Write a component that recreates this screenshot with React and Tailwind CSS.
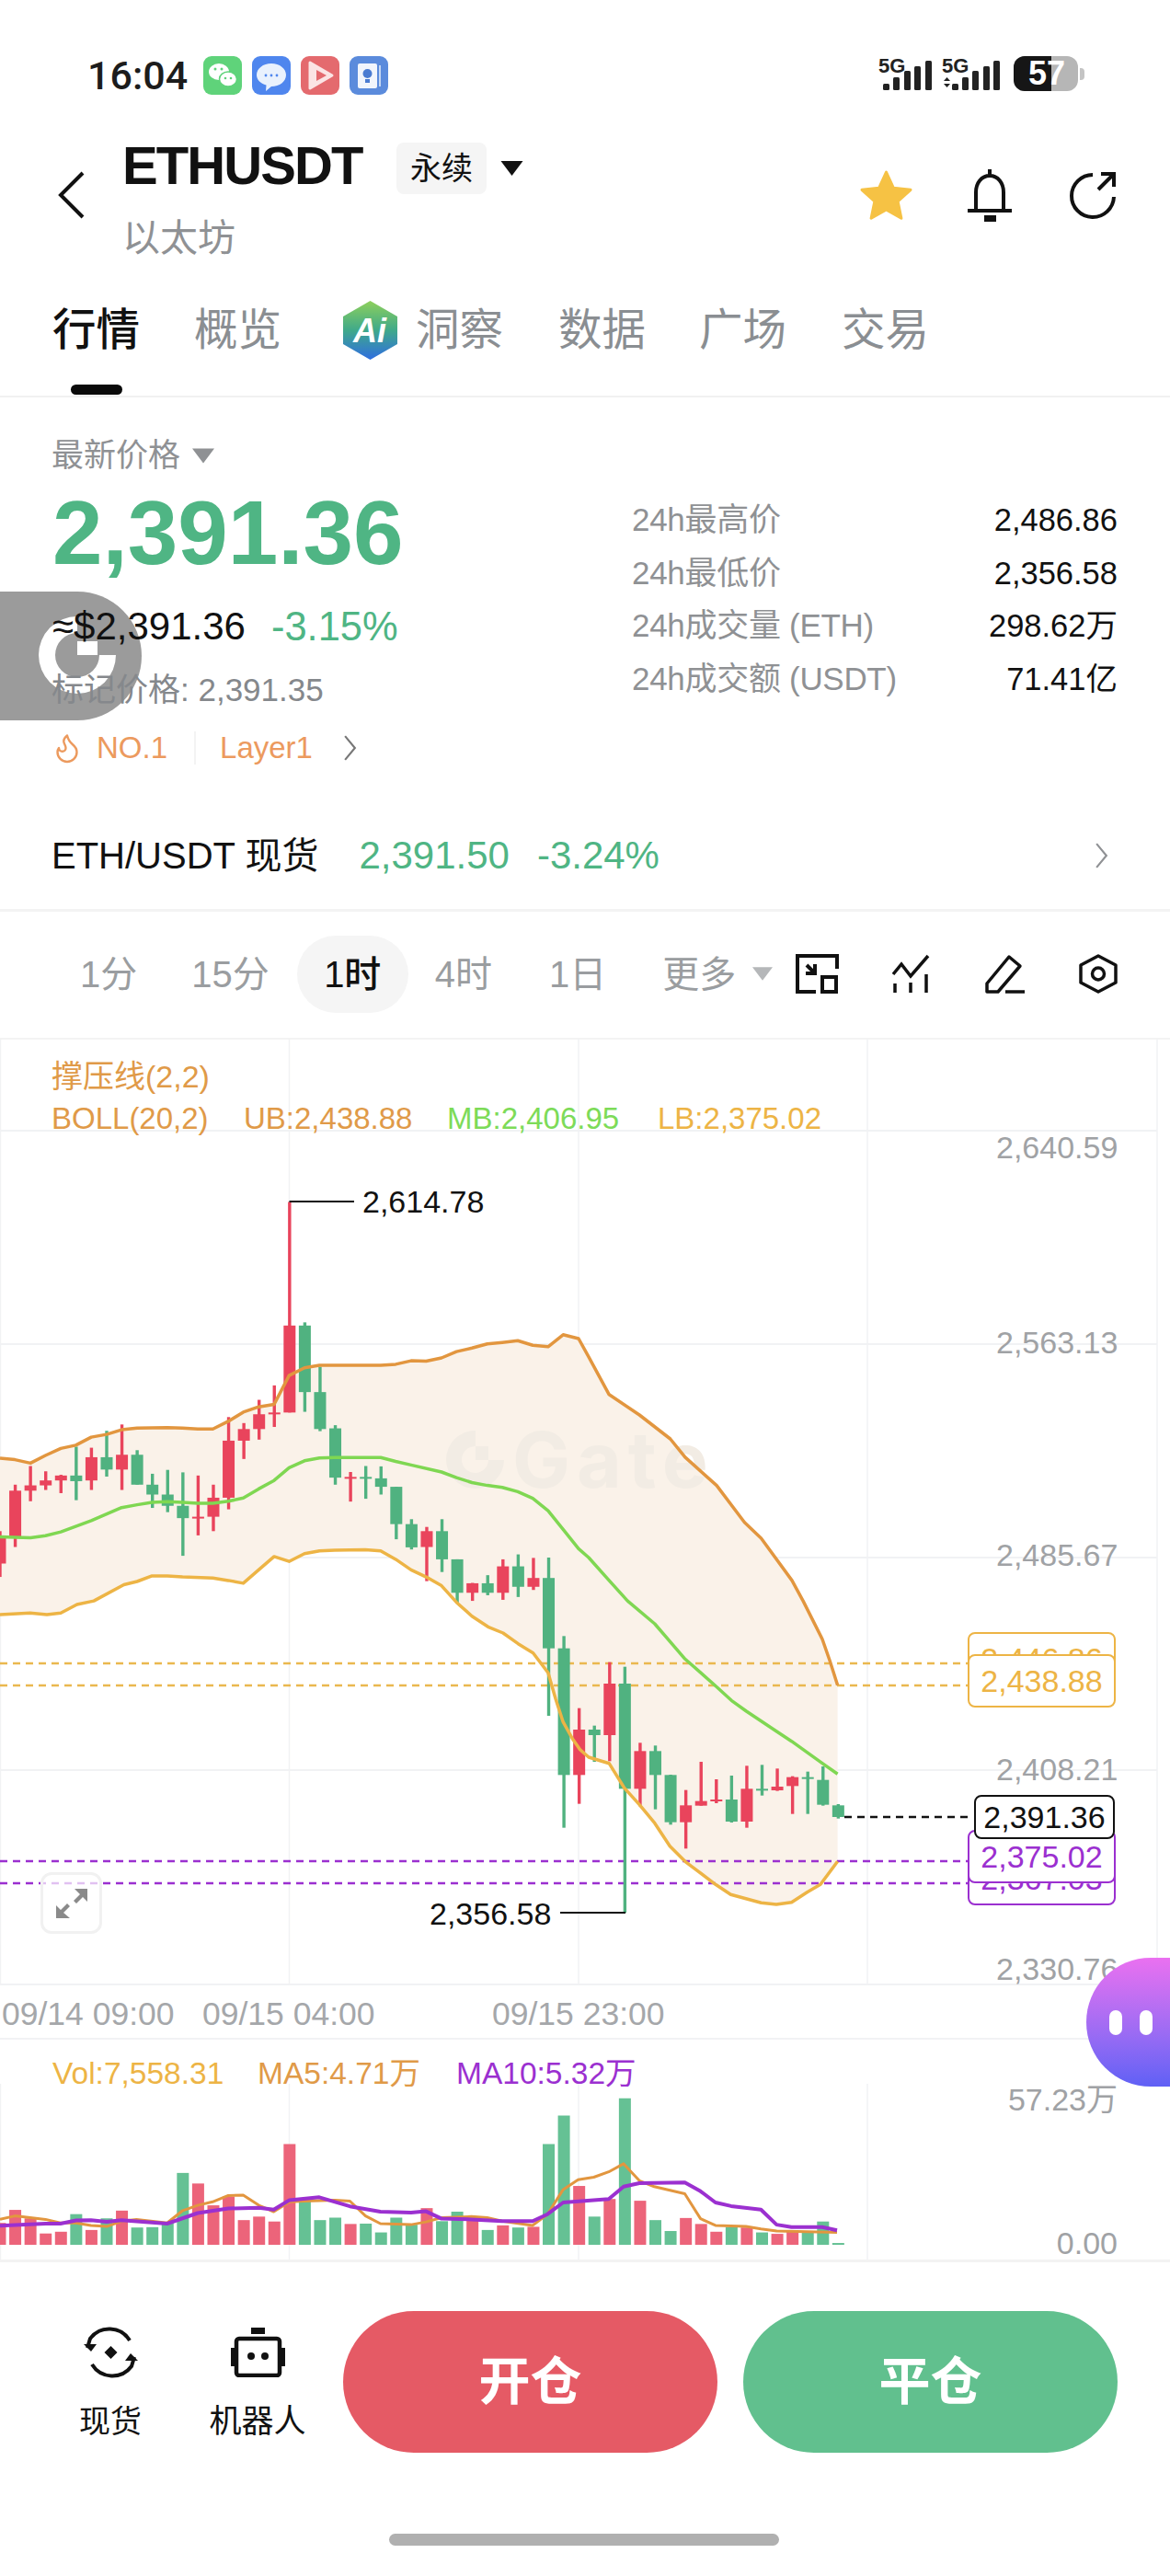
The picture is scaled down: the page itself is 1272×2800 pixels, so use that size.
import React from 'react';
import { Flame } from 'lucide-react';

// chart points were read off zoomed crops, these map them back to page pixels
const ax = (x) => x / 2.45;
const bx = (x) => 640 + x / 2.48;
const ty = (y) => 1140 + y / 2.613;
const by = (y) => 1740 + y / 3;
const vx = (x) => x / 1.233;
const vy = (y) => 2200 + y / 2.613;

const STEP = 16.57;
const RED = '#e9445c';
const GREEN = '#50b280';

// [color, wickTop, bodyTop, bodyBottom, wickBottom] in page pixels
const topCandles = [
  ['r', 1370, 1385, 1462, 1500], ['r', 1238, 1255, 1390, 1415], ['r', 1185, 1240, 1255, 1285], ['r', 1200, 1226, 1240, 1253],
  ['r', 1210, 1212, 1226, 1262], ['g', 1130, 1212, 1228, 1282], ['r', 1133, 1160, 1226, 1253], ['g', 1085, 1160, 1195, 1215],
  ['r', 1067, 1153, 1195, 1253], ['g', 1140, 1153, 1238, 1238], ['g', 1207, 1238, 1266, 1304], ['g', 1196, 1266, 1298, 1316],
  ['g', 1203, 1298, 1333, 1440], ['r', 1212, 1329, 1333, 1382], ['r', 1238, 1275, 1329, 1370], ['r', 1046, 1113, 1275, 1308],
  ['r', 1063, 1080, 1113, 1165], ['r', 997, 1038, 1080, 1110], ['r', 956, 1033, 1038, 1074], ['r', 435, 786, 1033, 1033],
  ['g', 777, 786, 975, 1031], ['g', 903, 975, 1080, 1086], ['g', 1069, 1078, 1218, 1238], ['r', 1202, 1216, 1219, 1286],
  ['g', 1185, 1216, 1219, 1278], ['g', 1186, 1220, 1244, 1266], ['g', 1244, 1244, 1350, 1393], ['g', 1336, 1350, 1416, 1422],
  ['r', 1358, 1370, 1415, 1512], ['g', 1336, 1370, 1450, 1486], ['g', 1450, 1450, 1545, 1575], ['r', 1517, 1518, 1545, 1568],
  ['g', 1495, 1518, 1545, 1552], ['r', 1450, 1470, 1545, 1565], ['g', 1436, 1470, 1528, 1557], ['r', 1446, 1503, 1528, 1537],
].map(([c, a, b, d, e]) => [c, ty(a), ty(b), ty(d), ty(e)]);

const lowCandles = [
  ['g', 1445, 1503, 155, 375], ['g', 115, 155, 568, 740], ['r', 350, 420, 568, 662], ['g', 407, 420, 438, 525],
  ['r', 200, 270, 438, 523], ['g', 215, 270, 613, 1017], ['r', 463, 490, 613, 670], ['g', 472, 490, 568, 680],
  ['g', 567, 568, 722, 730], ['r', 617, 667, 722, 808], ['r', 525, 653, 668, 668], ['r', 582, 648, 653, 660],
  ['g', 570, 648, 720, 723], ['r', 538, 613, 720, 740], ['g', 535, 613, 618, 635], ['r', 547, 606, 618, 620],
  ['r', 572, 575, 604, 695], ['g', 557, 575, 579, 695], ['g', 540, 584, 665, 668], ['g', 663, 667, 705, 710],
].map(([c, a, b, d, e], i) => (i === 0 ? [c, ty(a), ty(b), by(d), by(e)] : [c, by(a), by(b), by(d), by(e)]));

const candles = [...topCandles, ...lowCandles];

const upper = [
  ...[[0, 1163], [40, 1167], [81, 1177], [121, 1155], [162, 1135], [202, 1126], [243, 1103], [284, 1095], [324, 1082], [365, 1077], [446, 1076], [486, 1077], [527, 1080], [567, 1080], [608, 1058], [648, 1032], [689, 1017], [730, 1010], [770, 928], [811, 906], [851, 899], [1014, 899], [1054, 896], [1095, 886], [1135, 887], [1176, 878], [1216, 860], [1257, 850], [1298, 838], [1338, 834], [1379, 829], [1419, 842], [1460, 846], [1500, 812], [1541, 823]].map(([x, y]) => [ax(x), ty(y)]),
  ...[[0, 875], [55, 982], [137, 1040], [220, 1108], [260, 1160], [345, 1240], [420, 1345], [465, 1390], [548, 1510], [578, 1568]].map(([x, y]) => [bx(x), ty(y)]),
  ...[[630, 125], [650, 195], [671, 275]].map(([x, y]) => [bx(x), by(y)]),
];

const middle = [
  ...[[0, 1386], [81, 1389], [121, 1383], [162, 1372], [243, 1340], [324, 1303], [365, 1295], [405, 1288], [446, 1286], [486, 1288], [527, 1291], [567, 1291], [608, 1285], [648, 1276], [689, 1250], [730, 1226], [770, 1190], [811, 1170], [851, 1162], [892, 1161], [1014, 1161], [1054, 1172], [1095, 1182], [1176, 1202], [1216, 1218], [1257, 1232], [1298, 1240], [1338, 1246], [1379, 1258], [1419, 1277], [1460, 1312], [1500, 1365], [1541, 1420]].map(([x, y]) => [ax(x), ty(y)]),
  ...[[0, 1445], [55, 1510], [105, 1568]].map(([x, y]) => [bx(x), ty(y)]),
  ...[[178, 75], [260, 190], [340, 275], [385, 325], [425, 360], [506, 425], [547, 458], [630, 530], [671, 565]].map(([x, y]) => [bx(x), by(y)]),
];

const lower = [
  ...[[0, 45], [80, 40], [125, 45], [162, 40], [205, 12]].map(([x, y]) => [ax(x), by(y)]),
  ...[[250, 1568], [330, 1522], [365, 1513], [405, 1497], [446, 1497], [486, 1500], [567, 1503], [608, 1510], [648, 1518], [689, 1480], [730, 1442], [770, 1456], [811, 1434], [851, 1426], [892, 1424], [973, 1423], [1014, 1426], [1054, 1450], [1095, 1480], [1135, 1500], [1176, 1525]].map(([x, y]) => [ax(x), ty(y)]),
  ...[[1216, 5], [1257, 50], [1300, 85], [1340, 105], [1380, 140], [1420, 170], [1460, 235], [1480, 320], [1500, 395], [1525, 450], [1545, 485]].map(([x, y]) => [ax(x), by(y)]),
  ...[[0, 510], [55, 530], [96, 610], [137, 665], [178, 725], [219, 800], [260, 850], [342, 925], [383, 958], [465, 985], [506, 990], [547, 983], [589, 950], [625, 925], [671, 850]].map(([x, y]) => [bx(x), by(y)]),
];

const pts = (list) => list.map(([x, y]) => `${x.toFixed(1)},${y.toFixed(1)}`).join(' ');

// [color, top] on the zoomed volume crop
const volumes = [
  ['r', 565], ['r', 528], ['r', 552], ['r', 595], ['r', 590], ['g', 540], ['r', 585], ['g', 552], ['r', 530], ['g', 578],
  ['g', 577], ['g', 565], ['g', 423], ['r', 453], ['r', 515], ['r', 490], ['r', 557], ['r', 547], ['r', 561], ['r', 341],
  ['g', 500], ['g', 557], ['g', 550], ['r', 568], ['g', 567], ['g', 592], ['g', 550], ['g', 570], ['r', 523], ['g', 560],
  ['g', 533], ['r', 555], ['g', 585], ['r', 572], ['g', 578], ['r', 576], ['g', 341], ['g', 260], ['r', 460], ['g', 547],
  ['r', 497], ['g', 211], ['r', 502], ['g', 557], ['g', 588], ['r', 551], ['r', 568], ['r', 590], ['g', 577], ['r', 578],
  ['g', 592], ['r', 596], ['r', 590], ['g', 590], ['g', 561], ['g', 622],
];

const ma5 = [[0, 555], [20, 545], [61, 555], [81, 565], [102, 565], [122, 572], [143, 575], [163, 560], [183, 555], [224, 565], [245, 530], [265, 515], [285, 505], [306, 487], [326, 486], [347, 515], [367, 533], [388, 505], [408, 503], [449, 500], [469, 503], [490, 545], [510, 567], [551, 570], [571, 562], [592, 550], [632, 547], [653, 550], [673, 560], [714, 572], [734, 540], [755, 470], [775, 442], [796, 435], [816, 420], [836, 397], [857, 445], [877, 462], [918, 482], [939, 553], [959, 572], [1000, 575], [1020, 582], [1041, 588], [1122, 592]];
const ma10 = [[0, 573], [61, 567], [81, 567], [102, 558], [122, 557], [143, 562], [163, 557], [224, 567], [265, 537], [306, 524], [347, 522], [367, 527], [388, 500], [428, 492], [469, 518], [510, 533], [551, 536], [571, 532], [592, 553], [632, 555], [673, 560], [714, 560], [734, 540], [755, 507], [816, 497], [836, 462], [857, 452], [918, 450], [939, 475], [959, 507], [980, 517], [1020, 527], [1041, 570], [1061, 577], [1102, 577], [1122, 586]];

const AppIcons = () => (
  <div className="flex gap-[11px] ml-[17px]">
    <svg width="42" height="42" viewBox="0 0 42 42">
      <rect width="42" height="42" rx="9" fill="#5fd37a" />
      <ellipse cx="17" cy="17" rx="11" ry="9" fill="#fff" />
      <ellipse cx="27" cy="25" rx="9.5" ry="8" fill="#fff" stroke="#5fd37a" strokeWidth="1.5" />
      <circle cx="13" cy="14" r="1.5" fill="#5fd37a" /><circle cx="20" cy="14" r="1.5" fill="#5fd37a" />
      <circle cx="24" cy="24" r="1.3" fill="#5fd37a" /><circle cx="30" cy="24" r="1.3" fill="#5fd37a" />
    </svg>
    <svg width="42" height="42" viewBox="0 0 42 42">
      <rect width="42" height="42" rx="9" fill="#4f86ee" />
      <path d="M21 8c9 0 16 5.500 16 12.500S30 33 21 33l-6 5 .5-6.500C9 29.500 5 25.500 5 20.500 5 13.500 12 8 21 8z" fill="#e9f1fd" />
      <circle cx="15" cy="21" r="1.400" fill="#4f86ee" /><circle cx="21" cy="21" r="1.400" fill="#4f86ee" /><circle cx="27" cy="21" r="1.400" fill="#4f86ee" />
    </svg>
    <svg width="42" height="42" viewBox="0 0 42 42">
      <rect width="42" height="42" rx="9" fill="#e46a6e" />
      <path d="M10 7l24 14-24 14z" fill="#fbe4e4" stroke="#fbe4e4" strokeWidth="3" strokeLinejoin="round" />
      <path d="M17 15l11 6-11 6z" fill="#e46a6e" />
    </svg>
    <svg width="42" height="42" viewBox="0 0 42 42">
      <rect width="42" height="42" rx="9" fill="#5b8bdc" />
      <rect x="9" y="8" width="21" height="27" rx="2" fill="#f1f5fc" />
      <path d="M32 10h2v23h-2z" fill="#c5d7f3" />
      <circle cx="19.500" cy="19" r="5" fill="#4a7bd1" />
      <rect x="17" y="25" width="5" height="4" fill="#4a7bd1" />
    </svg>
  </div>
);

const Signal = ({ dual }) => (
  <svg className="-mt-[4px]" width={dual ? 64 : 58} height="46" viewBox={dual ? '0 -4 64 46' : '0 -4 58 46'}>
    <text x="0" y="18" fontSize="22" fontWeight="700" fill="#222" fontFamily="Liberation Sans, sans-serif">5G</text>
    {dual && <path d="M2 27l3.500-4 3.500 4zM2 30l3.500 4 3.500-4z" fill="#222" />}
    {(dual
      ? [[11, 30, 7], [22, 23, 14], [33, 16, 21], [45, 11, 26], [56, 5, 32]]
      : [[5, 30, 7], [16, 23, 14], [28, 16, 21], [39, 11, 26], [51, 5, 32]]
    ).map(([x, y, h]) => (
      <rect key={x} x={x} y={y} width="7" height={h} rx="1.500" fill="#222" />
    ))}
  </svg>
);

const Caret = ({ className }) => (
  <svg className={className} viewBox="0 0 24 16"><path d="M0 0h24L12 16z" fill="currentColor" /></svg>
);

const Chevron = ({ className }) => (
  <svg className={className} viewBox="0 0 14 28" fill="none"><path d="M2 2l10 12L2 26" stroke="currentColor" strokeWidth="2" /></svg>
);

const Candles = () => (
  <>
    {candles.map(([c, a, b, d, e], i) => {
      const x = i * STEP;
      const fill = c === 'r' ? RED : GREEN;
      return (
        <g key={i} fill={fill}>
          <rect x={x - 1.7} y={a} width="3.4" height={e - a} />
          <rect x={x - 6.5} y={b} width="13" height={Math.max(d - b, 2)} />
        </g>
      );
    })}
  </>
);

const MainChart = () => (
  <svg className="absolute inset-0" width="1272" height="1026" viewBox="0 1130 1272 1026">
    {[0.5, 314.5, 629, 943, 1258].map((x) => (
      <line key={x} x1={x} x2={x} y1="1130" y2="2156" stroke="#f1f2f4" strokeWidth="1.500" />
    ))}
    {[1229, 1461, 1693, 1924].map((y) => (
      <line key={y} x1="0" x2="1258" y1={y} y2={y} stroke="#f1f2f4" strokeWidth="2" />
    ))}
    <polygon points={pts([...upper, ...[...lower].reverse()])} fill="#faf2e9" />
    <g fill="#f2ece4">
      <path d="M517 1555a31.500 31.500 0 1 0 31 32h-17a14.500 14.500 0 1 1-14-15z" />
      <rect x="517" y="1572" width="14" height="15" />
      <text x="557" y="1617" fontSize="84" fontWeight="700" letterSpacing="7" fontFamily="Inter, sans-serif">Gate</text>
    </g>
    <g strokeDasharray="8 6" strokeWidth="2.500">
      <line x1="0" x2="1052" y1="1808" y2="1808" stroke="#eab84f" />
      <line x1="0" x2="1052" y1="1832" y2="1832" stroke="#eab84f" />
      <line x1="0" x2="1052" y1="2023" y2="2023" stroke="#9b30d0" />
      <line x1="0" x2="1052" y1="2047" y2="2047" stroke="#9b30d0" />
      <line x1="918" x2="1053" y1="1975" y2="1975" stroke="#111" />
    </g>
    <Candles />
    <polyline points={pts(upper)} fill="none" stroke="#e2963f" strokeWidth="3.500" strokeLinejoin="round" />
    <polyline points={pts(middle)} fill="none" stroke="#7fd752" strokeWidth="3.500" strokeLinejoin="round" />
    <polyline points={pts(lower)} fill="none" stroke="#edb445" strokeWidth="3.500" strokeLinejoin="round" />
    <path d="M385 1306H314.500" stroke="#111" strokeWidth="2" fill="none" />
    <path d="M609 2079H680" stroke="#111" strokeWidth="2" fill="none" />
  </svg>
);

const VolumeChart = () => (
  <svg className="absolute left-0 top-[48px]" width="1272" height="191" viewBox="0 2265 1272 191">
    {[0.5, 314.5, 629, 943].map((x) => (
      <line key={x} x1={x} x2={x} y1="2265" y2="2456" stroke="#f1f2f4" strokeWidth="1.500" />
    ))}
    {volumes.map(([c, t], i) => (
      <rect key={i} x={i * STEP - 6.5} y={vy(t)} width="13" height={2440 - vy(t)} fill={c === 'r' ? '#ec647a' : '#65c194'} />
    ))}
    <polyline points={pts(ma5.map(([x, y]) => [vx(x), vy(y)]))} fill="none" stroke="#e2963f" strokeWidth="3" strokeLinejoin="round" />
    <polyline points={pts(ma10.map(([x, y]) => [vx(x), vy(y)]))} fill="none" stroke="#9b30d0" strokeWidth="4" strokeLinejoin="round" />
  </svg>
);

const STATS = [
  ['24h最高价', '2,486.86'],
  ['24h最低价', '2,356.58'],
  ['24h成交量 (ETH)', '298.62万'],
  ['24h成交额 (USDT)', '71.41亿'],
];

export default function App() {
  return (
    <div className="relative w-[1272px] h-[2800px] overflow-hidden bg-white text-[#111] font-['Liberation_Sans','Noto_Sans_CJK_SC',sans-serif]">
      {/* status bar */}
      <div className="flex items-center h-[42px] mt-[61px] pl-[95px]">
        <span className="text-[43px] leading-[42px] font-medium text-[#1c1c1c] font-['Roboto','Liberation_Sans',sans-serif]">16:04</span>
        <AppIcons />
        <div className="ml-auto mr-[93px] flex items-start gap-[11px]">
          <Signal />
          <Signal dual />
          <div className="flex items-center ml-[3px] gap-[2px]">
            <div className="relative w-[70px] h-[38px]">
              <div className="flex h-full rounded-[12px] overflow-hidden bg-[#b6b6b6]">
                <div className="w-[41px] bg-[#161616]" />
              </div>
              <span className="absolute left-[16px] top-0 text-[36px] leading-[38px] font-bold text-white">57</span>
            </div>
            <div className="w-[5px] h-[13px] rounded-r-[4px] bg-[#c4c4c4]" />
          </div>
        </div>
      </div>

      {/* title */}
      <div className="flex items-start h-[197px] pt-[52px] pl-[62px] pr-[58px]">
        <svg className="mt-[31px]" width="30" height="52" viewBox="0 0 30 52" fill="none"><path d="M28 2L4 26l24 24" stroke="#111" strokeWidth="4" /></svg>
        <div className="ml-[41px]">
          <div className="flex items-center h-[56px]">
            <span className="w-[262px] pb-[6px] text-[58px] leading-[56px] font-bold tracking-[-1.9px]">ETHUSDT</span>
            <span className="ml-[36px] flex items-center justify-center w-[98px] h-[56px] rounded-[8px] bg-[#f5f5f5] text-[34px]">永续</span>
            <Caret className="ml-[15px] w-[25px] h-[16px] text-[#111]" />
          </div>
          <div className="mt-[25px] text-[41px] leading-[46px] text-[#8f9194]">以太坊</div>
        </div>
        <div className="ml-auto mt-[28px] flex items-center">
          <svg width="59" height="56" viewBox="0 0 59 56">
            <path d="M29.500 3l7.800 17.200 18.700 2.100-13.900 12.600 3.800 18.400-16.400-9.400-16.400 9.400 3.800-18.400L3 22.300l18.700-2.100z" fill="#f6c244" stroke="#f6c244" strokeWidth="3" strokeLinejoin="round" />
          </svg>
          <svg className="ml-[58px]" width="50" height="58" viewBox="0 0 50 58" fill="none" stroke="#111" strokeWidth="4">
            <path d="M25 1v7M10 46V26C10 16 16 8 25 8s15 8 15 18v20M1 46h48" />
            <rect x="19" y="51" width="13" height="7" fill="#111" stroke="none" />
          </svg>
          <svg className="ml-[60px]" width="53" height="53" viewBox="0 0 53 53" fill="none" stroke="#111" strokeWidth="4">
            <path d="M27 4a23 23 0 1 0 23 24M33 20L50 3M36 3h14v14" />
          </svg>
        </div>
      </div>

      {/* tabs */}
      <div className="relative flex items-center h-[132px] pb-[12px] pl-[57px] border-b-2 border-[#f1f1f1] text-[47.500px] leading-[56px] text-[#8a8e92]">
        <span className="text-[#111] font-medium">行情</span>
        <span className="ml-[59px]">概览</span>
        <svg className="ml-[67px]" width="59" height="64" viewBox="0 0 59 64">
          <defs>
            <linearGradient id="aiGrad" x1="0" y1="0" x2="0" y2="1">
              <stop offset="0" stopColor="#8ed05b" />
              <stop offset="0.5" stopColor="#3fa98a" />
              <stop offset="1" stopColor="#2f6ee0" />
            </linearGradient>
          </defs>
          <path d="M29.500 0L59 17v30L29.500 64 0 47V17z" fill="url(#aiGrad)" />
          <text x="29" y="45" textAnchor="middle" fontSize="36" fontWeight="700" fontStyle="italic" fill="#fff" fontFamily="Liberation Sans, sans-serif">Ai</text>
        </svg>
        <span className="ml-[20px]">洞察</span>
        <span className="ml-[60px]">数据</span>
        <span className="ml-[58px]">广场</span>
        <span className="ml-[60px]">交易</span>
        <div className="absolute left-[77px] bottom-[1px] w-[56px] h-[11px] rounded-[6px] bg-[#0a0a0a]" />
      </div>

      {/* price block */}
      <div className="absolute left-0 top-[643px] w-[154px] h-[140px] rounded-r-[70px] bg-[#9b9b9b]">
        <svg className="absolute left-[42px] top-[27px]" width="85" height="85" viewBox="0 0 85 85">
          <path d="M42 0a42 42 0 1 0 42 42H66a24 24 0 1 1-24-24z" fill="#fff" />
          <rect x="42" y="27" width="22" height="15" fill="#fff" />
        </svg>
      </div>
      <div className="relative flex pl-[57px] pr-[57px] h-[403px]">
        <div className="w-[630px] pt-[43px]">
          <div className="flex items-center -ml-[1px] h-[40px] text-[35px] leading-[40px] text-[#8f9194]">
            最新价格
            <Caret className="ml-[13px] w-[24px] h-[17px] text-[#8f9194]" />
          </div>
          <div className="mt-[14px] text-[98px] leading-[100px] font-bold text-[#4fb584]">2,391.36</div>
          <div className="mt-[29px] flex items-center h-[46px] text-[42px] leading-[46px]">
            <span>≈$2,391.36</span>
            <span className="ml-[28px] text-[43.500px] text-[#4fb584]">-3.15%</span>
          </div>
          <div className="mt-[26px] -ml-[1px] h-[40px] text-[35px] leading-[40px] text-[#85888c]">标记价格: 2,391.35</div>
          <div className="mt-[23px] flex items-center h-[40px] text-[33px] leading-[40px] text-[#ec9a5e]">
            <Flame className="-ml-[2px] w-[36px] h-[36px]" strokeWidth={1.6} />
            <span className="ml-[14px]">NO.1</span>
            <span className="ml-[29px] w-[2px] h-[36px] bg-[#f3f3f3]" />
            <span className="ml-[26px]">Layer1</span>
            <Chevron className="ml-[33px] w-[15px] h-[30px] text-[#777]" />
          </div>
        </div>
        <div className="flex-1 pt-[113px] flex flex-col gap-[17.700px]">
          {STATS.map(([label, value]) => (
            <div key={label} className="flex justify-between h-[40px] leading-[40px]">
              <span className="text-[35px] tracking-[-0.3px] text-[#8f9194]">{label}</span>
              <span className="text-[34.500px] text-[#111]">{value}</span>
            </div>
          ))}
        </div>
      </div>

      {/* spot row */}
      <div className="flex items-center h-[156px] pl-[56px] pr-[67px] pt-[37px] border-b-[3px] border-[#f3f3f3] text-[42px] leading-[48px]">
        <span className="text-[40px]">ETH/USDT 现货</span>
        <span className="ml-[44px] text-[#4fb584]">2,391.50</span>
        <span className="ml-[30px] text-[#4fb584]">-3.24%</span>
        <Chevron className="ml-auto w-[15px] h-[30px] text-[#8f9194]" />
      </div>

      {/* interval row */}
      <div className="flex items-center h-[139px] pb-[2px] border-b-2 border-[#f3f3f3] text-[40px] leading-[48px] text-[#9a9da0]">
        <span className="ml-[87px]">1分</span>
        <span className="ml-[59px]">15分</span>
        <span className="ml-[30px] flex items-center justify-center w-[121px] h-[84px] rounded-[42px] bg-[#f5f5f5] text-[#111] font-medium">1时</span>
        <span className="ml-[29px]">4时</span>
        <span className="ml-[62px]">1日</span>
        <span className="ml-[61px]">更多</span>
        <Caret className="ml-[18px] w-[22px] h-[15px] text-[#b5b7b9]" />
        <svg className="ml-[25px]" width="47" height="43" viewBox="0 0 47 43" fill="none" stroke="#111" strokeWidth="4">
          <path d="M45 16V2H2v39h20M12 12l9 9M21 11v10H11" />
          <rect x="29" y="25" width="15" height="16" />
        </svg>
        <svg className="ml-[58px]" width="41" height="43" viewBox="0 0 41 43" fill="none" stroke="#111" strokeWidth="3.500">
          <path d="M1 22l9-11 10 13L39 2M3 32v10M20 31v11M37 22v20" />
        </svg>
        <svg className="ml-[60px]" width="43" height="43" viewBox="0 0 43 43" fill="none" stroke="#111" strokeWidth="3.500" strokeLinejoin="round">
          <path d="M2 32L26 3l12 10-24 28H2zM22 41h21" />
        </svg>
        <svg className="ml-[59px]" width="42" height="43" viewBox="0 0 42 43" fill="none" stroke="#111" strokeWidth="3.500" strokeLinejoin="round">
          <path d="M21 2l19 10v19L21 41 2 31V12z" />
          <circle cx="21" cy="21.500" r="6.500" />
        </svg>
      </div>

      {/* candle chart */}
      <div className="relative h-[1026px]">
        <MainChart />
        <div className="relative pl-[56px] pt-[20px] text-[33px] leading-[40px]">
          <div className="text-[34px] text-[#e09a48]">撑压线(2,2)</div>
          <div className="flex mt-[6px]">
            <span className="w-[209px] text-[#e09a48]">BOLL(20,2)</span>
            <span className="w-[221px] text-[#e09a48]">UB:2,438.88</span>
            <span className="w-[229px] text-[#7ddb58]">MB:2,406.95</span>
            <span className="text-[#edb445]">LB:2,375.02</span>
          </div>
        </div>

        <span className="absolute left-[1083px] top-[97px] text-[34px] leading-[40px] text-[#a0a2a5]">2,640.59</span>
        <span className="absolute left-[1083px] top-[309px] text-[34px] leading-[40px] text-[#a0a2a5]">2,563.13</span>
        <span className="absolute left-[1083px] top-[540px] text-[34px] leading-[40px] text-[#a0a2a5]">2,485.67</span>
        <span className="absolute left-[1083px] top-[773px] text-[34px] leading-[40px] text-[#a0a2a5]">2,408.21</span>
        <span className="absolute left-[1083px] top-[990px] text-[34px] leading-[40px] text-[#a0a2a5]">2,330.76</span>

        <span className="absolute left-[394px] top-[156px] text-[34px] leading-[40px]">2,614.78</span>
        <span className="absolute left-[467px] top-[930px] text-[34px] leading-[40px]">2,356.58</span>

        <div className="absolute left-[1052px] top-[644px] flex items-center justify-center w-[161px] h-[58px] rounded-[8px] border-2 border-[#edb445] bg-white text-[34px] text-[#edb445]">2,446.86</div>
        <div className="absolute left-[1052px] top-[668px] flex items-center justify-center w-[161px] h-[58px] rounded-[8px] border-2 border-[#edb445] bg-white text-[34px] text-[#edb445]">2,438.88</div>
        <div className="absolute left-[1052px] top-[883px] flex items-center justify-center w-[161px] h-[58px] rounded-[8px] border-2 border-[#9b30d0] bg-white text-[34px] text-[#9b30d0]">2,367.03</div>
        <div className="absolute left-[1052px] top-[859px] flex items-center justify-center w-[161px] h-[58px] rounded-[8px] border-2 border-[#9b30d0] bg-white text-[34px] text-[#9b30d0]">2,375.02</div>
        <div className="absolute left-[1059px] top-[821px] flex items-center justify-center w-[153px] h-[48px] rounded-[8px] border-2 border-[#111] bg-white text-[34px] text-[#111]">2,391.36</div>

        <div className="absolute left-[44px] top-[905px] flex items-center justify-center w-[67px] h-[67px] rounded-[12px] border-[3px] border-[#f1f1f1] bg-white/70">
          <svg width="34" height="32" viewBox="0 0 34 32" fill="#8a8a8a">
            <path d="M20 0h14v14l-5-5-7 7-3-3 7-7zM0 32V18l5 5 7-7 3 3-7 7 7 6z" />
          </svg>
        </div>
      </div>

      {/* time axis */}
      <div className="flex items-center h-[61px] pl-[2px] pt-[4px] border-y-2 border-t-[#f1f2f4] border-b-[#f1f2f4] text-[35.500px] leading-[40px] text-[#a5a7aa]">
        <span className="w-[218px]">09/14 09:00</span>
        <span className="w-[315px]">09/15 04:00</span>
        <span>09/15 23:00</span>
      </div>

      {/* volume chart */}
      <div className="relative h-[239px]">
        <VolumeChart />
        <div className="relative flex pl-[57px] pt-[17px] text-[33.500px] leading-[40px]">
          <span className="w-[223px] text-[#edb445]">Vol:7,558.31</span>
          <span className="w-[216px] text-[#e09a48]">MA5:4.71万</span>
          <span className="text-[#9b30d0]">MA10:5.32万</span>
        </div>
        <span className="absolute right-[57px] top-[45px] text-[34px] leading-[40px] text-[#a0a2a5]">57.23万</span>
        <span className="absolute right-[57px] top-[201px] text-[34px] leading-[40px] text-[#a0a2a5]">0.00</span>
      </div>

      {/* bottom actions */}
      <div className="flex items-start h-[300px] border-t-[3px] border-[#f3f3f3] pt-[53px] pl-[82px] pr-[57px]">
        <div className="flex flex-col items-center w-[76px] pt-[16px]">
          <svg width="59" height="58" viewBox="0 0 59 58" fill="none" stroke="#111" strokeWidth="4">
            <path d="M50 16A26 26 0 0 0 7 14L4 24M9 42a26 26 0 0 0 43 2l3-10" />
            <path d="M29.500 22l7 7-7 7-7-7z" fill="#111" stroke="none" />
            <path d="M0 20l8 8 6-8zM59 38l-8-8-6 8z" fill="#111" stroke="none" />
          </svg>
          <span className="mt-[26px] text-[34px] leading-[40px]">现货</span>
        </div>
        <div className="ml-[69px] flex flex-col items-center w-[106px] pt-[18px]">
          <svg width="59" height="54" viewBox="0 0 59 54" fill="none" stroke="#111" strokeWidth="4.500">
            <rect x="22" y="0" width="15" height="7" fill="#111" stroke="none" />
            <rect x="6" y="12" width="47" height="40" rx="3" />
            <path d="M2 22v20M57 22v20" />
            <circle cx="22" cy="31" r="4" fill="#111" stroke="none" />
            <circle cx="37" cy="31" r="4" fill="#111" stroke="none" />
          </svg>
          <span className="mt-[28px] text-[35px] leading-[40px]">机器人</span>
        </div>
        <div className="ml-[40px] flex items-center justify-center w-[407px] h-[154px] rounded-[77px] bg-[#e55a65] text-[56px] font-bold text-white">开仓</div>
        <div className="ml-[28px] flex items-center justify-center w-[407px] h-[154px] rounded-[77px] bg-[#61c08e] text-[56px] font-bold text-white">平仓</div>
      </div>

      {/* floating bits */}
      <div className="absolute right-0 top-[2128px] flex items-center gap-[19px] w-[91px] h-[140px] pl-[25px] rounded-l-[70px] bg-gradient-to-b from-[#ea70f0] to-[#5f60f5]">
        <span className="w-[14px] h-[27px] rounded-[7px] bg-white" />
        <span className="w-[14px] h-[27px] rounded-[7px] bg-white" />
      </div>
      <div className="absolute left-[423px] top-[2754px] w-[424px] h-[13px] rounded-[7px] bg-[#b0b0b0]" />
    </div>
  );
}
